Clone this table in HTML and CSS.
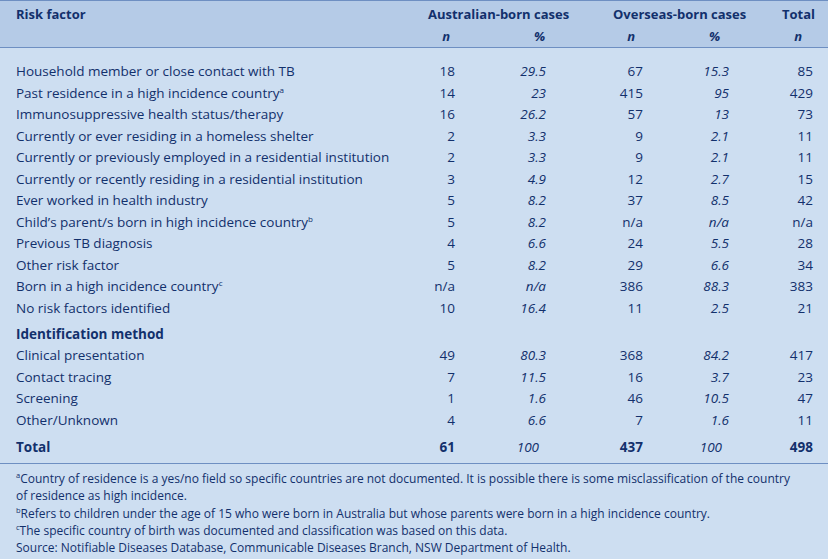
FILE: index.html
```html
<!DOCTYPE html>
<html>
<head>
<meta charset="utf-8">
<link rel="stylesheet" href="styles.css">
</head>
<body>
<div class="panel">
<table class="tb">
<colgroup>
<col class="c-lbl"><col class="c-aun"><col class="c-aup"><col class="c-osn"><col class="c-osp"><col class="c-tot">
</colgroup>
<thead>
<tr class="h1">
<th class="lbl">Risk factor</th>
<th colspan="2" class="grp grp-au">Australian-born cases</th>
<th colspan="2" class="grp grp-os">Overseas-born cases</th>
<th class="tot-h">Total</th>
</tr>
<tr class="h2">
<th class="lbl"></th>
<th class="sub sub-aun">n</th>
<th class="sub sub-aup">%</th>
<th class="sub sub-osn">n</th>
<th class="sub sub-osp">%</th>
<th class="sub sub-tot">n</th>
</tr>
</thead>
<tbody>
<tr class="first"><td class="lbl">Household member or close contact with TB</td><td>18</td><td class="pc">29.5</td><td>67</td><td class="pc">15.3</td><td>85</td></tr>
<tr><td class="lbl">Past residence in a high incidence country<sup>a</sup></td><td>14</td><td class="pc">23</td><td>415</td><td class="pc">95</td><td>429</td></tr>
<tr><td class="lbl">Immunosuppressive health status/therapy</td><td>16</td><td class="pc">26.2</td><td>57</td><td class="pc">13</td><td>73</td></tr>
<tr><td class="lbl">Currently or ever residing in a homeless shelter</td><td>2</td><td class="pc">3.3</td><td>9</td><td class="pc">2.1</td><td>11</td></tr>
<tr><td class="lbl">Currently or previously employed in a residential institution</td><td>2</td><td class="pc">3.3</td><td>9</td><td class="pc">2.1</td><td>11</td></tr>
<tr><td class="lbl">Currently or recently residing in a residential institution</td><td>3</td><td class="pc">4.9</td><td>12</td><td class="pc">2.7</td><td>15</td></tr>
<tr><td class="lbl">Ever worked in health industry</td><td>5</td><td class="pc">8.2</td><td>37</td><td class="pc">8.5</td><td>42</td></tr>
<tr><td class="lbl">Child’s parent/s born in high incidence country<sup>b</sup></td><td>5</td><td class="pc">8.2</td><td class="na">n/a</td><td class="pc na">n/a</td><td class="na">n/a</td></tr>
<tr><td class="lbl">Previous TB diagnosis</td><td>4</td><td class="pc">6.6</td><td>24</td><td class="pc">5.5</td><td>28</td></tr>
<tr><td class="lbl">Other risk factor</td><td>5</td><td class="pc">8.2</td><td>29</td><td class="pc">6.6</td><td>34</td></tr>
<tr><td class="lbl">Born in a high incidence country<sup>c</sup></td><td class="na">n/a</td><td class="pc na">n/a</td><td>386</td><td class="pc">88.3</td><td>383</td></tr>
<tr><td class="lbl">No risk factors identified</td><td>10</td><td class="pc">16.4</td><td>11</td><td class="pc">2.5</td><td>21</td></tr>
<tr class="section"><td class="lbl strong">Identification method</td><td></td><td></td><td></td><td></td><td></td></tr>
<tr><td class="lbl">Clinical presentation</td><td>49</td><td class="pc">80.3</td><td>368</td><td class="pc">84.2</td><td>417</td></tr>
<tr><td class="lbl">Contact tracing</td><td>7</td><td class="pc">11.5</td><td>16</td><td class="pc">3.7</td><td>23</td></tr>
<tr><td class="lbl">Screening</td><td>1</td><td class="pc">1.6</td><td>46</td><td class="pc">10.5</td><td>47</td></tr>
<tr><td class="lbl">Other/Unknown</td><td>4</td><td class="pc">6.6</td><td>7</td><td class="pc">1.6</td><td>11</td></tr>
<tr class="total"><td class="lbl">Total</td><td>61</td><td class="pc pc-tot">100</td><td>437</td><td class="pc pc-tot">100</td><td>498</td></tr>
</tbody>
</table>
<div class="notes">
<p><sup>a</sup>Country of residence is a yes/no field so specific countries are not documented. It is possible there is some misclassification of the country<br>of residence as high incidence.</p>
<p><sup>b</sup>Refers to children under the age of 15 who were born in Australia but whose parents were born in a high incidence country.</p>
<p><sup>c</sup>The specific country of birth was documented and classification was based on this data.</p>
<p>Source: Notifiable Diseases Database, Communicable Diseases Branch, NSW Department of Health.</p>
</div>
</div>
</body>
</html>
```

FILE: styles.css
```css
html, body {
  margin: 0;
  padding: 0;
  background: #cddef1;
}
body {
  width: 828px;
  height: 559px;
  overflow: hidden;
  font-family: "Open Sans", "Noto Sans", sans-serif;
  color: #12306c;
}
.panel {
  width: 828px;
}
.tb {
  width: 828px;
  border-collapse: collapse;
  table-layout: fixed;
  font-size: 13.5px;
}
.c-lbl { width: 400px; }
.c-aun { width: 55px; }
.c-aup { width: 92px; }
.c-osn { width: 96px; }
.c-osp { width: 87px; }
.c-tot { width: 98px; }

thead {
  background: #b5cbe7;
}
thead tr.h1 th {
  border-top: 1px solid #6e8fc2;
  padding-top: 2px;
}
thead tr.h2 th {
  border-bottom: 1px solid #6e8fc2;
}
th {
  font-size: 13px;
  font-weight: 700;
  line-height: 22px;
  padding: 0;
  white-space: nowrap;
}
th.lbl {
  text-align: left;
  padding-left: 16px;
}
th.grp {
  text-align: left;
}
th.grp-au { padding-left: 28px; }
th.grp-os { padding-left: 66px; }
th.tot-h {
  text-align: right;
  padding-right: 13px;
}
th.sub {
  font-style: italic;
  text-align: right;
}
th.sub-aun { padding-right: 5px; }
th.sub-aup { padding-right: 2px; }
th.sub-osn { padding-right: 8px; }
th.sub-osp { padding-right: 10px; }
th.sub-tot { padding-right: 26px; }

td {
  padding: 0;
  line-height: 21.5px;
  text-align: right;
  white-space: nowrap;
}
td:last-child {
  padding-right: 15px;
}
td.lbl {
  text-align: left;
  padding-left: 16px;
}
td.pc {
  font-style: italic;
  padding-right: 1px;
}
td.pc-tot {
  padding-right: 8px;
}
td.strong {
  font-weight: 700;
}
tr.first td {
  padding-top: 13px;
}
tr.section td {
  padding-top: 4.5px;
}
tr.total td {
  font-weight: 700;
  padding-top: 6px;
  padding-bottom: 4.5px;
  border-bottom: 1px solid #6e8fc2;
}
tr.total td.pc {
  font-weight: 400;
}
sup {
  font-size: 8px;
  line-height: 0;
  vertical-align: 5px;
}

.notes {
  padding: 6px 0 0 16px;
  font-size: 12px;
  font-stretch: 90%;
  line-height: 17.25px;
}
.notes p {
  margin: 0;
  white-space: nowrap;
}
.notes sup {
  font-size: 7.5px;
  vertical-align: 5px;
}
```
